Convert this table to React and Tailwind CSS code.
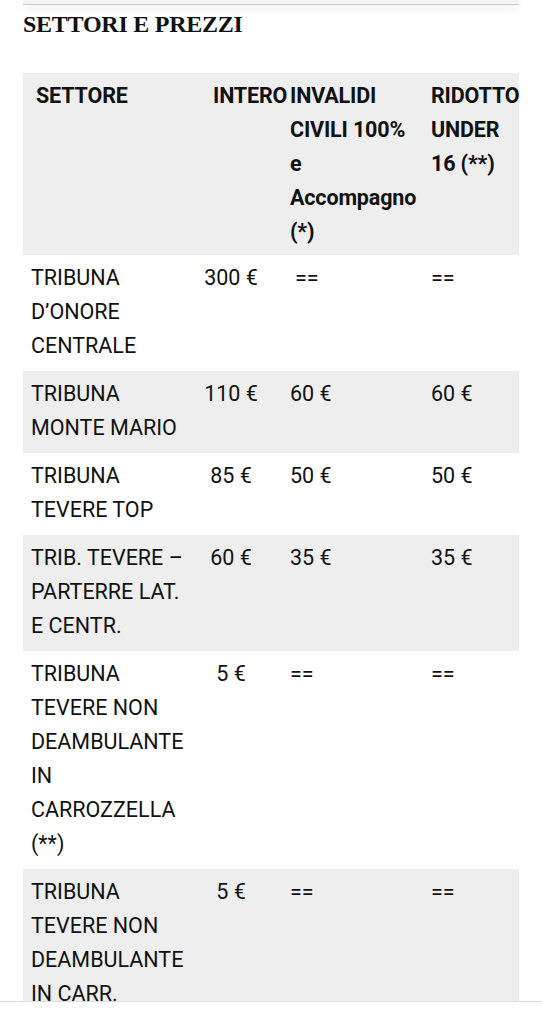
import React from 'react';

const rows = [
  { name: ['TRIBUNA', 'D’ONORE', 'CENTRALE'], intero: '300 €', inv: '==', rid: '==', invPad: 'pl-[34px]', bg: 'bg-white' },
  { name: ['TRIBUNA', 'MONTE MARIO'], intero: '110 €', inv: '60 €', rid: '60 €', bg: 'bg-[#eeeeee]' },
  { name: ['TRIBUNA', 'TEVERE TOP'], intero: '85 €', inv: '50 €', rid: '50 €', bg: 'bg-white' },
  { name: ['TRIB. TEVERE –', 'PARTERRE LAT.', 'E CENTR.'], intero: '60 €', inv: '35 €', rid: '35 €', bg: 'bg-[#eeeeee]' },
  { name: ['TRIBUNA', 'TEVERE NON', 'DEAMBULANTE', 'IN', 'CARROZZELLA', '(**)'], intero: '5 €', inv: '==', rid: '==', bg: 'bg-white' },
  { name: ['TRIBUNA', 'TEVERE NON', 'DEAMBULANTE', 'IN CARR.'], intero: '5 €', inv: '==', rid: '==', bg: 'bg-[#eeeeee]' },
];

function Lines({ items }) {
  return items.map((t, i) => <div key={i} className="whitespace-nowrap">{t}</div>);
}

export default function App() {
  return (
    <div className="relative h-[1023px] w-[542px] overflow-hidden bg-white text-[#111]">
      {/* leftover card edge from the block above */}
      <div className="mx-[23px] h-[5px] bg-[#f4f4f4] border-b border-[#c8c8c8] shadow-[0_4px_10px_rgba(0,0,0,0.08)]" />

      <h2 className="mx-[23px] mt-[5px] text-[24px] leading-[28px] font-bold tracking-[-0.25px] font-['Liberation_Serif','DejaVu_Serif',serif]">
        SETTORI E PREZZI
      </h2>

      <div className="mx-[23px] mt-[35px] font-['Roboto','Liberation_Sans',sans-serif] text-[21.5px] leading-[34px]">
        {/* header */}
        <div className="grid grid-cols-[178px_60px_165px_94px] bg-[#eeeeee] pt-[6px] pb-[6px] font-bold tracking-[-0.15px]">
          <div className="pl-[13px]">SETTORE</div>
          <div className="pl-[12px] whitespace-nowrap">INTERO</div>
          <div className="pl-[29px]">
            <Lines items={['INVALIDI', 'CIVILI 100%', 'e', 'Accompagno', '(*)']} />
          </div>
          <div className="pl-[5px]">
            <Lines items={['RIDOTTO', 'UNDER', '16 (**)']} />
          </div>
        </div>

        {rows.map((r, i) => (
          <div key={i} className={`grid grid-cols-[178px_60px_165px_94px] pt-[6px] pb-[8px] ${r.bg}`}>
            <div className="pl-[8px]">
              <Lines items={r.name} />
            </div>
            <div className="text-center whitespace-nowrap">{r.intero}</div>
            <div className={`${r.invPad || 'pl-[29px]'} whitespace-nowrap`}>{r.inv}</div>
            <div className="pl-[5px] whitespace-nowrap">{r.rid}</div>
          </div>
        ))}
      </div>

      {/* bottom bar */}
      <div className="absolute bottom-0 left-0 right-0 h-[22px] bg-white border-t border-[#dddddd]" />
    </div>
  );
}
